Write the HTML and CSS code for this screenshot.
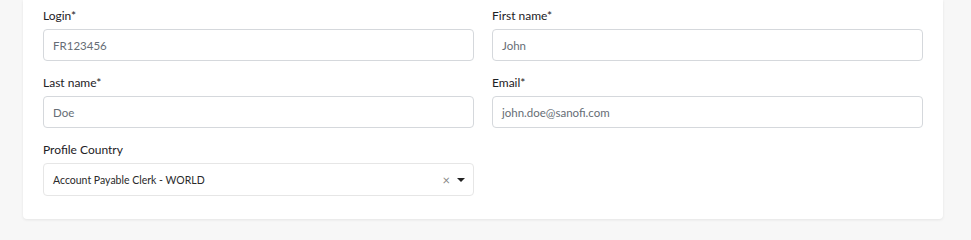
FILE: index.html
```html
<!DOCTYPE html>
<html lang="en">
<head>
<meta charset="utf-8">
<title>Profile form</title>
<link rel="stylesheet" href="styles.css">
</head>
<body>
<div class="card">
  <div class="form-grid">
    <div class="group">
      <label class="label">Login*</label>
      <div class="input">FR123456</div>
    </div>
    <div class="group">
      <label class="label">First name*</label>
      <div class="input">John</div>
    </div>
    <div class="group">
      <label class="label">Last name*</label>
      <div class="input">Doe</div>
    </div>
    <div class="group">
      <label class="label">Email*</label>
      <div class="input">john.doe@sanofi.com</div>
    </div>
    <div class="group">
      <label class="label">Profile Country</label>
      <div class="select">
        <span class="select-value">Account Payable Clerk - WORLD</span>
        <span class="select-clear">×</span>
        <span class="select-caret"></span>
      </div>
    </div>
  </div>
</div>
</body>
</html>
```
FILE: styles.css
```css
html, body {
  margin: 0;
  padding: 0;
}
body {
  background: #f7f7f7;
  font-family: "Lato", "Noto Sans", sans-serif;
  color: #1d2125;
  width: 971px;
  height: 223px;
  overflow: hidden;
}
.card {
  margin-left: 23px;
  width: 920px;
  box-sizing: border-box;
  background: #ffffff;
  border-radius: 0 0 4px 4px;
  box-shadow: 0 1px 3px rgba(0, 0, 0, 0.08);
  padding: 7px 20px 10px 20px;
}
.form-grid {
  display: grid;
  grid-template-columns: 431px 431px;
  column-gap: 18px;
}
.group {
  display: flex;
  flex-direction: column;
  margin-bottom: 13px;
}
.label {
  font-size: 12px;
  line-height: 18px;
  margin-bottom: 4px;
  color: #1d2125;
}
.input {
  height: 32px;
  box-sizing: border-box;
  border: 1px solid #d5d8dc;
  border-radius: 4px;
  padding: 0 9px;
  display: flex;
  align-items: center;
  font-size: 11.5px;
  color: #666d75;
}
.select {
  height: 33px;
  box-sizing: border-box;
  border: 1px solid #e6e6e6;
  border-radius: 4px;
  padding: 0 8px 0 9px;
  display: flex;
  align-items: center;
  font-size: 10.5px;
  color: #2a2a2a;
}
.select-value {
  flex: 1;
}
.select-clear {
  color: #888888;
  font-size: 13px;
  margin-right: 7px;
}
.select-caret {
  width: 0;
  height: 0;
  border-left: 4px solid transparent;
  border-right: 4px solid transparent;
  border-top: 4px solid #222222;
}
```
